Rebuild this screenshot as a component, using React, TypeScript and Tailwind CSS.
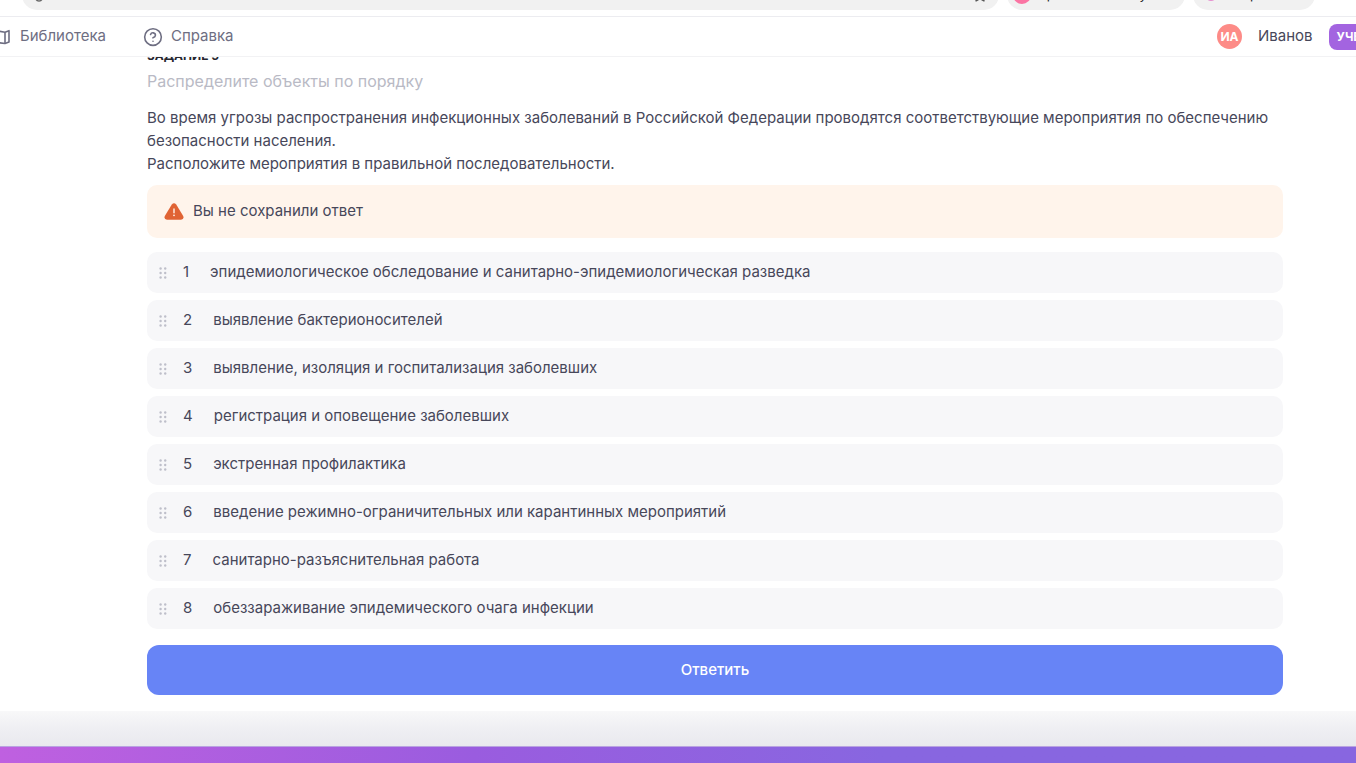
import { CircleHelp } from "lucide-react";

const items = [
  "эпидемиологическое обследование и санитарно-эпидемиологическая разведка",
  "выявление бактерионосителей",
  "выявление, изоляция и госпитализация заболевших",
  "регистрация и оповещение заболевших",
  "экстренная профилактика",
  "введение режимно-ограничительных или карантинных мероприятий",
  "санитарно-разъяснительная работа",
  "обеззараживание эпидемического очага инфекции",
];

function Grip() {
  return (
    <svg width="8" height="12" viewBox="0 0 8 12" fill="#bebfca" className="shrink-0" aria-hidden="true">
      {[1.5, 6, 10.5].map((y) => (
        <g key={y}>
          <circle cx="1.6" cy={y} r="1.2" />
          <circle cx="6.2" cy={y} r="1.2" />
        </g>
      ))}
    </svg>
  );
}

function LibraryIcon() {
  return (
    <svg width="20" height="18" viewBox="0 0 20 18" fill="none" stroke="currentColor" strokeWidth="1.6" strokeLinejoin="round" aria-hidden="true">
      <path d="M1.5 4 6 2.8l9 1.4 4-1.5v11.4l-4 1.4-9-1.2-4.5 1.2z" />
      <path d="M6 2.8v11.5M15 4.2v11.3" />
    </svg>
  );
}

function WarningIcon() {
  return (
    <svg width="20" height="18" viewBox="0 0 20 18" className="shrink-0" aria-hidden="true">
      <path d="M7.800 1.500Q10-1.200 12.200 1.500L19.200 13Q20.400 16.500 17 16.700H3Q-.4 16.500 .8 13Z" fill="#e06334" />
      <path d="M10 6v3.800" stroke="#fff4eb" strokeWidth="1.4" strokeLinecap="round" />
      <circle cx="10" cy="12.300" r=".9" fill="#fff4eb" />
    </svg>
  );
}

function BrowserBar() {
  return (
    <div className="flex h-4 items-end gap-2 overflow-hidden pr-[41px] pb-1.5 pl-[22px] text-[13px] text-[#222]">
      <div className="flex h-[30px] flex-1 items-center justify-between rounded-full bg-[#f1f1f1] px-3">
        <svg width="10" height="14" viewBox="0 0 10 14" fill="none" stroke="#666" strokeWidth="1.5" aria-hidden="true">
          <circle cx="5" cy="10" r="3" />
        </svg>
        <svg width="14" height="14" viewBox="0 0 14 14" fill="none" stroke="#555" strokeWidth="1.5" strokeLinejoin="round" aria-hidden="true">
          <path d="M7 1l1.800 4 4.200.5-3 3 .9 4.300L7 10.600 3.100 12.800 4 8.500 1 5.500 5.200 5z" />
        </svg>
      </div>
      <div className="flex h-[30px] w-[178px] items-center gap-1.5 rounded-full bg-[#f1f1f1] pl-1.5 whitespace-nowrap">
        <span className="size-[18px] shrink-0 rounded-full bg-[#fb74a3]" />
        Приложения ко у
      </div>
      <div className="flex h-[30px] w-[122px] items-center gap-2 rounded-full bg-[#f1f1f1] pl-3 whitespace-nowrap">
        <span className="size-3 shrink-0 rounded-full bg-[#e58fcf]" />
        Сборник
      </div>
    </div>
  );
}

export default function App() {
  return (
    <div className="flex min-h-screen flex-col overflow-hidden bg-white font-['Inter',sans-serif] text-[15px] text-[#47475a]">
      <BrowserBar />
      <header className="relative z-10 flex h-[41px] items-center justify-between border-t border-b border-t-[#ececf0] border-b-[#f2f2f4] bg-white">
        <nav className="-ml-[10px] flex items-center gap-[37px] text-[#6e6e82]">
          <a href="#library" className="flex items-center gap-2.5">
            <LibraryIcon />
            Библиотека
          </a>
          <a href="#help" className="flex items-center gap-2">
            <CircleHelp size={20} strokeWidth={1.9} />
            Справка
          </a>
        </nav>
        <div className="flex w-[139px] items-center gap-4">
          <span className="flex size-[25px] shrink-0 items-center justify-center rounded-full bg-[#fd8b87] text-[12px] font-bold text-white">ИА</span>
          <span>Иванов</span>
          <button type="button" className="h-[26px] shrink-0 rounded-lg bg-[#a364e0] px-2 text-[12px] font-bold text-white">УЧЕНИК</button>
        </div>
      </header>
      <main className="mr-[73px] ml-[147px] pb-4">
        <h1 className="-mt-[9px] text-[12px] leading-4 font-bold text-[#26262f]">ЗАДАНИЕ 5</h1>
        <p className="mt-[5px] text-[16px] leading-6 text-[#b9bac5]">Распределите объекты по порядку</p>
        <p className="mt-[13px] leading-[23px]">
          Во время угрозы распространения инфекционных заболеваний в Российской Федерации проводятся соответствующие мероприятия по обеспечению безопасности населения.
          <br />
          Расположите мероприятия в правильной последовательности.
        </p>
        <div role="alert" className="mt-2.5 flex h-[53px] items-center gap-[9px] rounded-[10px] bg-[#fff4eb] pl-[17px]">
          <WarningIcon />
          Вы не сохранили ответ
        </div>
        <ol className="mt-3.5 flex flex-col gap-[7px]">
          {items.map((text, i) => (
            <li key={text} className="flex h-[41px] items-center rounded-[10px] bg-[#f7f7f9] pl-3">
              <Grip />
              <span className="mr-[21px] ml-4">{i + 1}</span>
              {text}
            </li>
          ))}
        </ol>
        <button type="button" className="mt-4 h-[50px] w-full rounded-xl bg-[#6784f6] font-medium text-white">Ответить</button>
      </main>
      <div className="h-[35px] bg-linear-to-b from-[#f8f8f9] via-[#efeff3] to-[#e9e9ee]" />
      <footer className="min-h-[17px] flex-1 border-t border-[#b9a3e0] bg-linear-to-r from-[#bf60e0] via-[#9a5cdf] via-35% to-[#8866e0] to-65%" />
    </div>
  );
}
